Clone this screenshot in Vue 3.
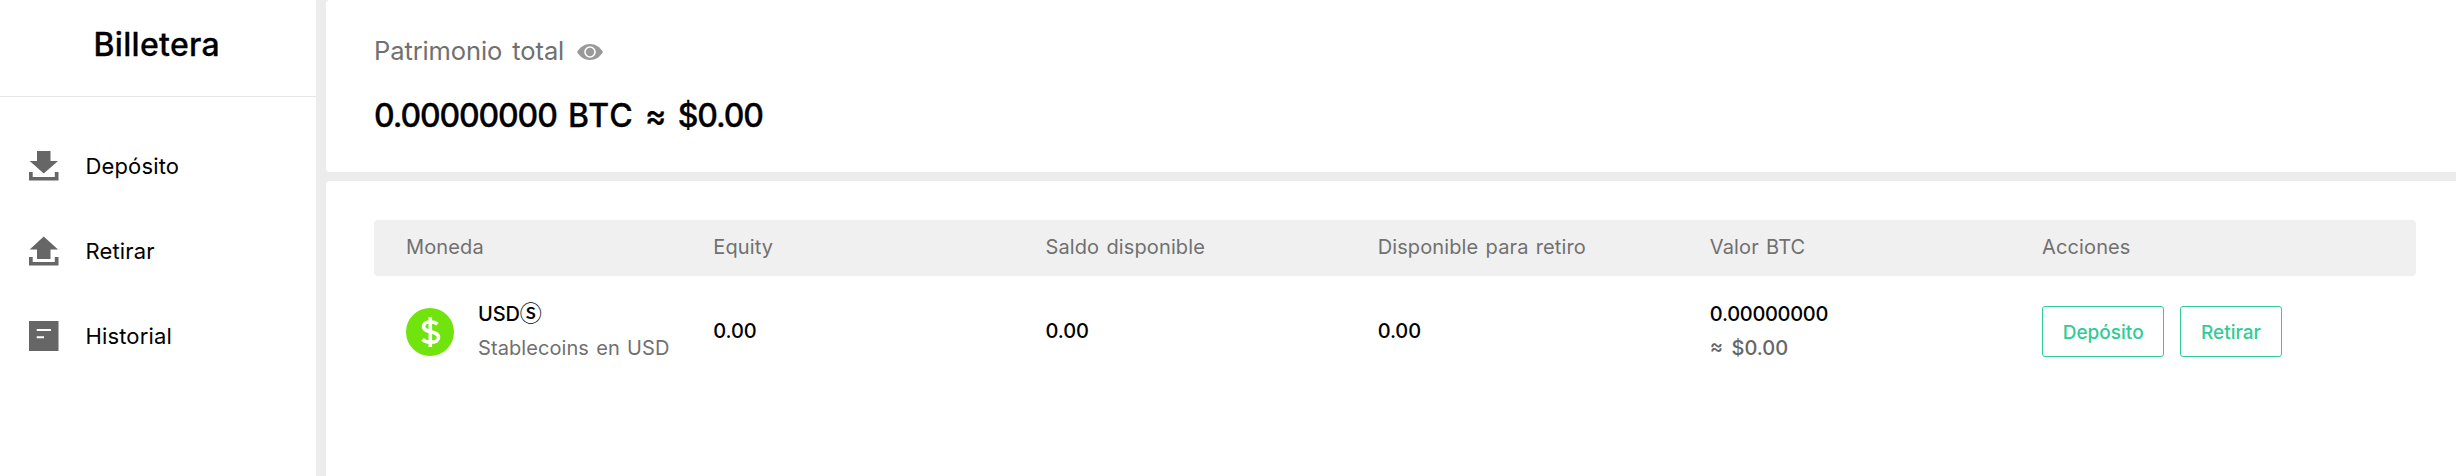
<script setup>
const columns = ['Moneda', 'Equity', 'Saldo disponible', 'Disponible para retiro', 'Valor BTC', 'Acciones']
const menu = [
  { label: 'Depósito', path: 'M8 0h13.500v10H29L14.750 22.500 0.700 10H8zM0 21h3.700v5h22.100v-5h3.700v8.500H0z' },
  { label: 'Retirar', path: 'M14.750 0.500L29 13.500h-7.500v9.500H8v-9.500H0.700zM0 21h3.700v5h22.100v-5h3.700v8.500H0z' },
  { label: 'Historial', path: 'M0 0h29.500v30H0zM7.700 8v2h14.300v-2zM7.700 15.200v2h7.300v-2z' },
]
</script>

<template>
  <div class="page">
    <aside class="sidebar">
      <h1 class="title">Billetera</h1>
      <nav class="menu">
        <a v-for="m in menu" :key="m.label" class="item">
          <svg class="icon" width="30" height="30" viewBox="0 0 30 30"><path fill-rule="evenodd" :d="m.path" /></svg>
          <span>{{ m.label }}</span>
        </a>
      </nav>
    </aside>
    <main class="content">
      <section class="card summary">
        <div class="label">
          <span>Patrimonio total</span>
          <svg class="eye" width="26" height="16" viewBox="0 0 26 16"><path d="M0 8C3 3 7.500 0 13 0s10 3 13 8c-3 5-7.500 8-13 8S3 13 0 8z" fill="#999" /><circle cx="13" cy="8" r="5" fill="#999" stroke="#fff" stroke-width="1.600" /></svg>
        </div>
        <div class="total"><span class="figure">0.00000000</span> <span class="unit">BTC</span> <span>≈</span> <span class="figure">$0.00</span></div>
      </section>
      <section class="card assets">
        <div class="row head"><div v-for="c in columns" :key="c">{{ c }}</div></div>
        <div class="row body">
          <div class="coin">
            <svg class="logo" width="48" height="48" viewBox="0 0 48 48"><circle cx="24" cy="24" r="24" fill="#70e40c" /><path d="M24.300 9v30M31.500 16.200c-1.800-1.500-4.200-2.400-7-2.400-4.200 0-6.900 1.900-6.900 4.700 0 7.200 14.900 3.400 14.900 10.800 0 3-3 5-7.400 5-3.500 0-6.500-1.100-8.600-3" fill="none" stroke="#fff" stroke-width="3.600" /></svg>
            <div class="stack"><span class="strong">USD<span class="ring">Ⓢ</span></span><span class="muted">Stablecoins en USD</span></div>
          </div>
          <div v-for="n in 3" :key="n" class="strong">0.00</div>
          <div class="stack"><span class="strong btc">0.00000000</span><span class="approx">≈ $0.00</span></div>
          <div class="actions"><button>Depósito</button><button>Retirar</button></div>
        </div>
      </section>
    </main>
  </div>
</template>

<style>
body { margin: 0; background: #ececec; }
</style>

<style scoped>
.page { display: flex; gap: 10px; width: 2456px; height: 476px; overflow: hidden; background: #ececec; font-family: Inter, "Liberation Sans", sans-serif; color: #000; }
.sidebar { width: 316px; background: #fff; }
.title { box-sizing: border-box; height: 97px; margin: 0; padding: 0 2.500px 7px 0; border-bottom: 1px solid #e6e6e6; display: flex; align-items: center; justify-content: center; font-size: 32px; font-weight: 500; letter-spacing: 0.300px; -webkit-text-stroke: 0.300px #000; }
.menu { padding-top: 26px; }
.item { display: flex; align-items: center; gap: 26.500px; height: 85px; padding-left: 29px; font-size: 22px; letter-spacing: 0.150px; }
.icon { fill: #666; }
.content { flex: 1; display: flex; flex-direction: column; gap: 9px; }
.card { background: #fff; border-radius: 4px 0 0 4px; }
.summary { box-sizing: border-box; height: 172px; padding: 34px 48px 0; }
.label { display: flex; align-items: center; gap: 13px; height: 32px; font-size: 25.500px; color: #707070; letter-spacing: -0.100px; word-spacing: 3px; }
.eye { margin-top: 4px; }
.total { margin-top: 30px; line-height: 40px; font-size: 32px; font-weight: 500; word-spacing: 2.800px; -webkit-text-stroke: 0.300px #000; }
.figure { letter-spacing: -1.120px; }
.unit { letter-spacing: 1px; }
.assets { flex: 1; padding: 39px 40px 0 48px; border-radius: 4px 0 0 0; }
.row { display: grid; grid-template-columns: 307.300px repeat(4, 332.200px) 1fr; align-items: center; padding-left: 32px; font-size: 20px; word-spacing: 1.500px; }
.head { box-sizing: border-box; height: 56px; padding-bottom: 2px; border-radius: 4px; background: #f0f0f0; color: #707070; letter-spacing: 0.120px; }
.body { height: 110px; }
.coin { display: flex; align-items: center; gap: 24px; }
.logo { position: relative; top: 1px; }
.stack { display: flex; flex-direction: column; gap: 4px; line-height: 30px; white-space: nowrap; }
.strong { font-weight: 500; letter-spacing: -0.100px; }
.btc { letter-spacing: -0.300px; }
.ring { font-family: "Noto Sans CJK SC", sans-serif; font-size: 22px; line-height: 1; }
.muted { color: #707070; letter-spacing: 0.080px; }
.approx { color: #666; font-weight: 500; word-spacing: 3px; }
.actions { display: flex; gap: 16px; padding-top: 1px; }
button { box-sizing: border-box; height: 51px; padding: 1px 19.700px 0; border: 1px solid #31cb97; border-radius: 3px; background: #fff; color: #31cb97; font: 500 19px Inter, "Liberation Sans", sans-serif; }
</style>
